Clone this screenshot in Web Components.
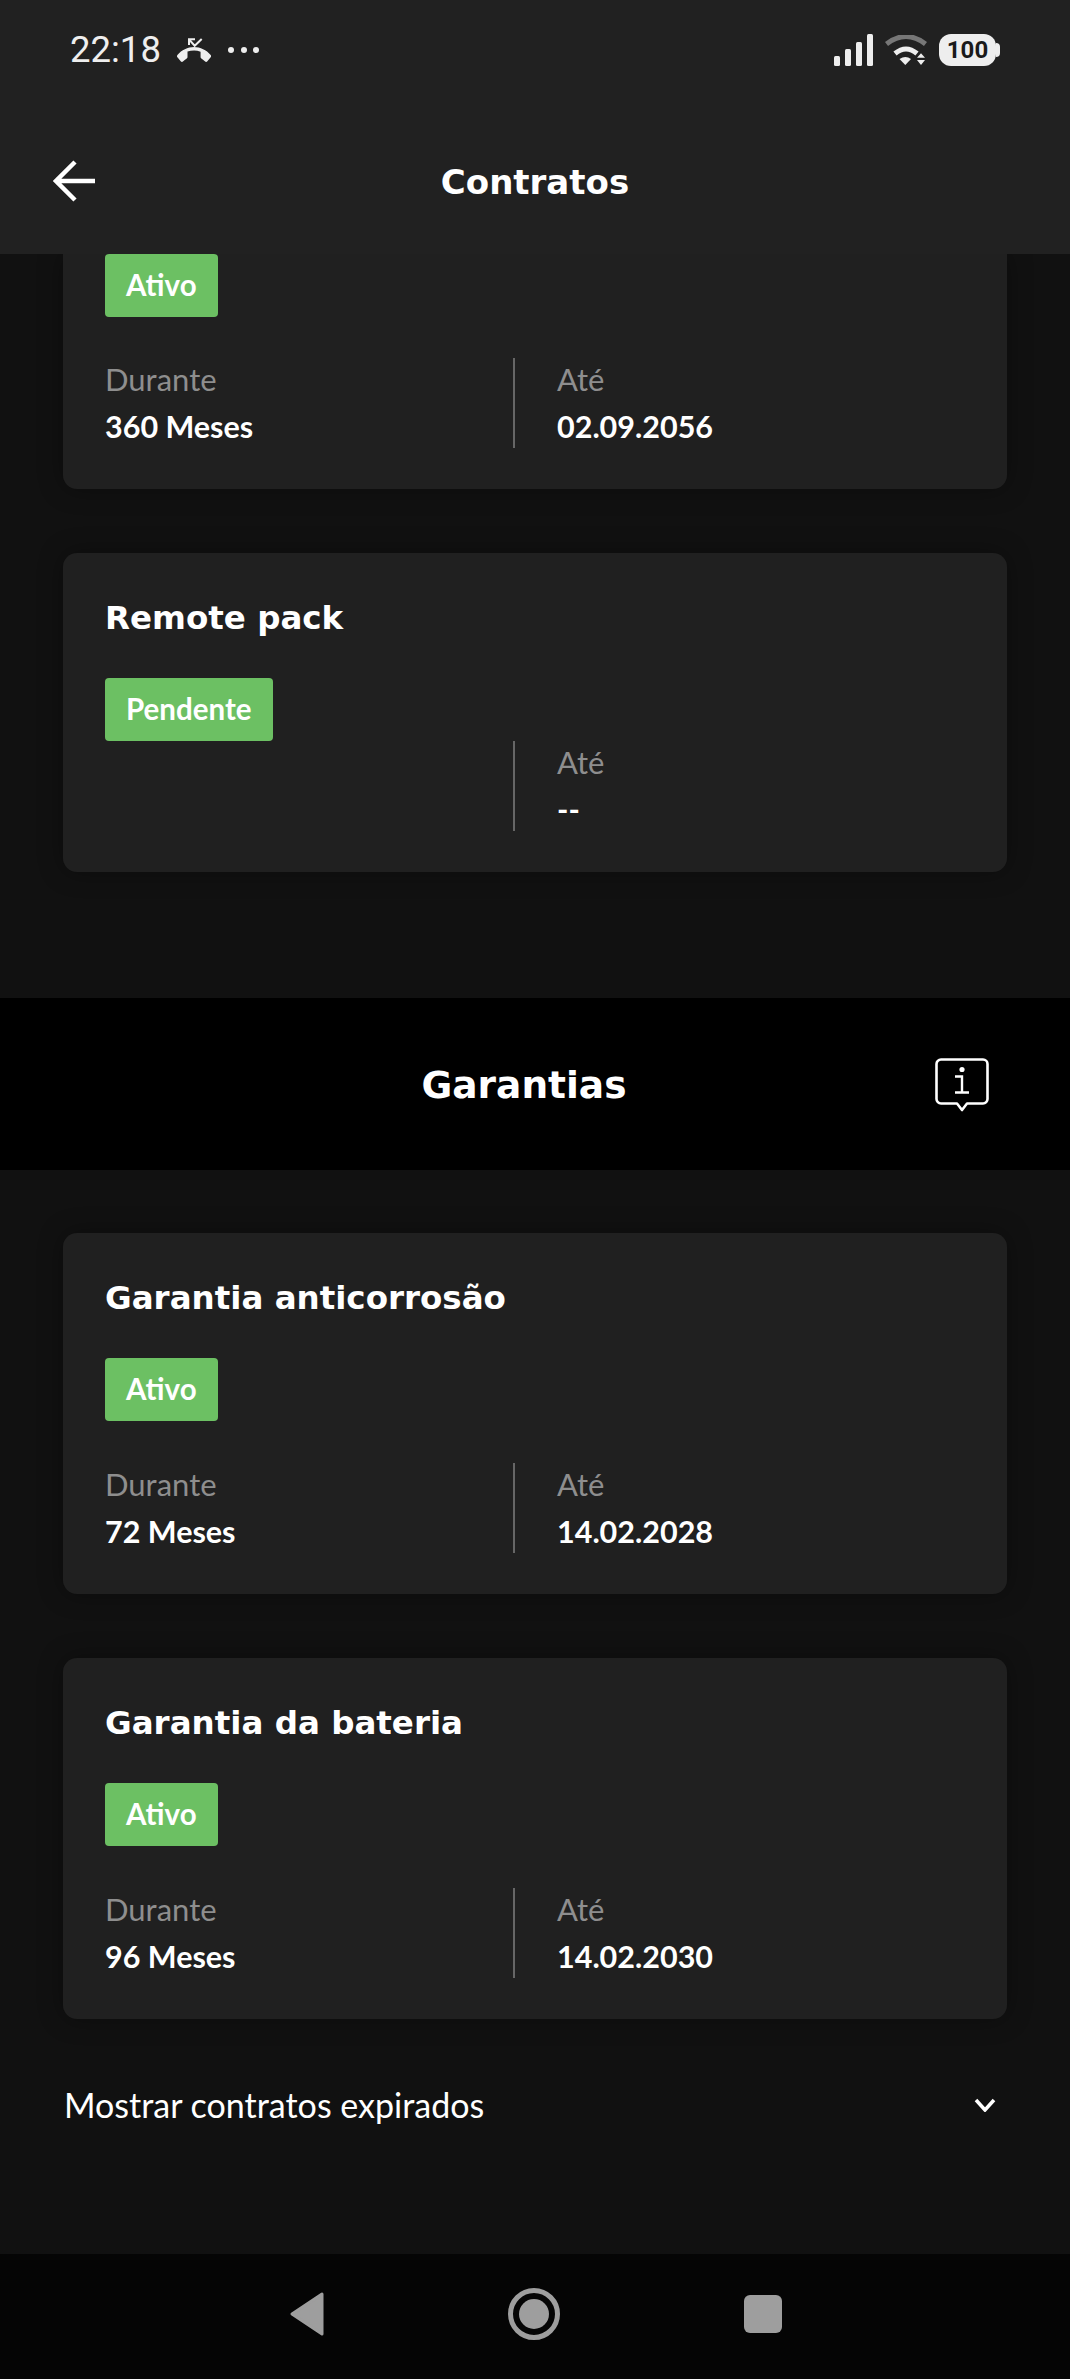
<!DOCTYPE html>
<html lang="pt">
<head>
<meta charset="utf-8">
<title>Contratos</title>
<style>
    html, body { margin: 0; background: #111; }
    body { width: 1070px; height: 2379px; overflow: hidden; }
</style>
</head>
<body>
<x-app>
    <x-status-bar slot="top" time="22:18" battery="100"></x-status-bar>
    <x-app-bar slot="top" heading="Contratos"></x-app-bar>

    <x-contract-card clipped status="Ativo" duration="360 Meses" until="02.09.2056"></x-contract-card>
    <x-contract-card tight heading="Remote pack" status="Pendente" until="--"></x-contract-card>

    <x-section-bar heading="Garantias"></x-section-bar>

    <x-contract-card heading="Garantia anticorrosão" status="Ativo" duration="72 Meses" until="14.02.2028"></x-contract-card>
    <x-contract-card heading="Garantia da bateria" status="Ativo" duration="96 Meses" until="14.02.2030"></x-contract-card>

    <x-expander label="Mostrar contratos expirados"></x-expander>

    <x-nav-bar slot="bottom"></x-nav-bar>
</x-app>
<script>
"use strict"

const titleFont = `"DejaVu Sans", sans-serif`
const bodyFont = `Lato, "Noto Sans", sans-serif`

class App extends HTMLElement {
    constructor() {
        super()
        this.attachShadow({ mode: "open" }).innerHTML = `
            <style>
                :host {
                    display: flex;
                    flex-direction: column;
                    height: 2379px;
                    background: #111;
                }
                main {
                    flex: 1;
                    display: flex;
                    flex-direction: column;
                    overflow: hidden;
                }
            </style>
            <slot name="top"></slot>
            <main><slot></slot></main>
            <slot name="bottom"></slot>
        `
    }
}

class StatusBar extends HTMLElement {
    constructor() {
        super()
        this.attachShadow({ mode: "open" }).innerHTML = `
            <style>
                :host {
                    display: flex;
                    align-items: center;
                    height: 96px;
                    padding: 2px 74px 0 70px;
                    background: #212121;
                    color: #eee;
                    font: 400 36.5px/1 Roboto, sans-serif;
                }
                .left { display: flex; align-items: center; gap: 16px; }
                .right { display: flex; align-items: center; margin-left: auto; }
                svg { display: block; }
                .battery {
                    position: relative;
                    width: 57px;
                    height: 32px;
                    margin-left: 12px;
                    border-radius: 12px;
                    background: #eee;
                    color: #1a1a1a;
                    font: 700 24px/32px Roboto, sans-serif;
                    text-align: center;
                }
                .battery::after {
                    content: "";
                    position: absolute;
                    right: -4px;
                    top: 9px;
                    width: 4px;
                    height: 14px;
                    border-radius: 0 4px 4px 0;
                    background: #eee;
                }
            </style>
            <div class="left">
                <span id="time"></span>
                <svg width="34" height="26" viewBox="0 0 34 26" fill="#eee">
                    <path stroke="#eee" stroke-width="2" fill="none" d="M18 2.3H12V8M12 2.3l5.7 6.4 7-6.7"/>
                    <path transform="translate(0 -1.9) scale(1.42 1.7)" d="M12 9c-1.6 0-3.15.25-4.6.72v3.1c0 .39-.23.74-.56.9-.98.49-1.87 1.12-2.66 1.85-.18.18-.43.28-.7.28-.28 0-.53-.11-.71-.29L.29 13.08c-.18-.17-.29-.42-.29-.7 0-.28.11-.53.29-.71C3.34 8.78 7.46 7 12 7s8.66 1.78 11.71 4.67c.18.18.29.43.29.71 0 .28-.11.53-.29.71l-2.48 2.48c-.18.18-.43.29-.71.29-.27 0-.52-.11-.7-.28-.79-.74-1.69-1.36-2.67-1.85-.33-.16-.56-.5-.56-.9v-3.1C15.15 9.25 13.6 9 12 9z"/>
                </svg>
                <svg width="32" height="8" viewBox="0 0 32 8" fill="#eee">
                    <circle cx="4" cy="4" r="3"/><circle cx="17" cy="4" r="3"/><circle cx="29" cy="4" r="3"/>
                </svg>
            </div>
            <div class="right">
                <svg width="39" height="32" viewBox="0 0 39 32" fill="#eee">
                    <rect x="0" y="22" width="6" height="10" rx="1.5"/>
                    <rect x="11" y="15" width="6" height="17" rx="1.5"/>
                    <rect x="22" y="8" width="6" height="24" rx="1.5"/>
                    <rect x="33" y="0" width="6" height="32" rx="1.5"/>
                </svg>
                <svg style="margin-left:12px" width="42" height="30" viewBox="0 0 42 30" fill="none">
                    <path stroke="#777" stroke-width="5" d="M1.5 9Q21 -6 40.5 9"/>
                    <path stroke="#eee" stroke-width="5" d="M10 18.5Q21 9.5 32 18.5"/>
                    <path fill="#eee" d="M14.5 24Q20.5 20 26 24L20.3 30Z"/>
                    <path fill="#eee" d="M36 18.3L40 22.7H32ZM32 25H40L36 30Z"/>
                </svg>
                <div class="battery" id="battery"></div>
            </div>
        `
    }
    static observedAttributes = ["time", "battery"]
    attributeChangedCallback(name, old, newVal) {
        this.shadowRoot.getElementById(name).textContent = newVal
    }
}

class AppBar extends HTMLElement {
    constructor() {
        super()
        this.attachShadow({ mode: "open" }).innerHTML = `
            <style>
                :host {
                    display: flex;
                    align-items: center;
                    justify-content: center;
                    position: relative;
                    z-index: 1;
                    height: 144px;
                    padding-top: 12px;
                    background: #212121;
                    color: #fff;
                    font: 700 34px/1 ${titleFont};
                }
                svg { position: absolute; left: 53px; top: 62px; }
            </style>
            <svg width="42" height="42" viewBox="0 0 42 42" fill="none" stroke="#fff" stroke-width="4.5">
                <path d="M42 21H3M22 2L3 21L22 40"/>
            </svg>
            <span id="heading"></span>
        `
    }
    static observedAttributes = ["heading"]
    attributeChangedCallback(name, old, newVal) {
        this.shadowRoot.getElementById("heading").textContent = newVal
    }
}

class StatusBadge extends HTMLElement {
    constructor() {
        super()
        this.attachShadow({ mode: "open" }).innerHTML = `
            <style>
                :host {
                    display: block;
                    width: fit-content;
                    height: 63px;
                    padding: 0 21px;
                    border-radius: 4px;
                    background: #6cc063;
                    color: #fff;
                    font: 700 29.5px/62px ${bodyFont};
                }
            </style>
            <slot></slot>
        `
    }
}

class ContractCard extends HTMLElement {
    constructor() {
        super()
        this.attachShadow({ mode: "open" }).innerHTML = `
            <style>
                :host {
                    display: block;
                    margin: 0 63px 64px;
                    padding: 45px 42px 41px;
                    border-radius: 14px;
                    background: #202020;
                    box-shadow: 0 0 24px rgba(0, 0, 0, .35);
                    color: #fff;
                }
                :host([clipped]) {
                    padding-top: 0;
                    border-radius: 0 0 14px 14px;
                }
                :host([clipped]) h3 { display: none; }
                :host([clipped]) .info { margin-top: 41px; }
                h3 {
                    margin: 0 0 40px;
                    font: 700 32.5px/40px ${titleFont};
                }
                .info {
                    display: grid;
                    grid-template-columns: 408px 1fr;
                    height: 90px;
                    margin-top: 42px;
                }
                :host([tight]) .info { margin-top: 0; }
                .cell + .cell {
                    padding-left: 42px;
                    border-left: 2px solid #666;
                }
                .label {
                    color: #8e8e8e;
                    font: 400 31px/42px ${bodyFont};
                }
                .value {
                    margin-top: 5px;
                    font: 700 30.5px/42px ${bodyFont};
                }
            </style>
            <h3 id="heading"></h3>
            <status-badge id="status"></status-badge>
            <div class="info">
                <div class="cell" id="left">
                    <div class="label">Durante</div>
                    <div class="value" id="duration"></div>
                </div>
                <div class="cell">
                    <div class="label">Até</div>
                    <div class="value" id="until"></div>
                </div>
            </div>
        `
        this.shadowRoot.getElementById("left").style.visibility = "hidden"
    }
    static observedAttributes = ["heading", "status", "duration", "until"]
    attributeChangedCallback(name, old, newVal) {
        this.shadowRoot.getElementById(name).textContent = newVal
        if (name === "duration") {
            this.shadowRoot.getElementById("left").style.visibility = "visible"
        }
    }
}

class SectionBar extends HTMLElement {
    constructor() {
        super()
        this.attachShadow({ mode: "open" }).innerHTML = `
            <style>
                :host {
                    display: flex;
                    align-items: center;
                    justify-content: center;
                    position: relative;
                    height: 168px;
                    margin: 62px 0 63px;
                    padding: 4px 22px 0 0;
                    background: #000;
                    color: #fff;
                    font: 700 37.5px/1 ${titleFont};
                }
                svg { position: absolute; right: 81px; top: 60px; }
            </style>
            <span id="heading"></span>
            <svg width="54" height="54" viewBox="0 0 54 54" fill="none" stroke="#fff">
                <path stroke-width="2.6" stroke-linejoin="round" d="M6 1.5H48A4.5 4.5 0 0 1 52.500 6V41A4.500 4.500 0 0 1 48 45.500H32L27 52L22 45.500H6A4.500 4.500 0 0 1 1.500 41V6A4.500 4.500 0 0 1 6 1.500Z"/>
                <circle cx="27" cy="11.500" r="2.600" fill="#fff" stroke="none"/>
                <path stroke-width="2.400" d="M20 18.500H27V34.500M20 34.500H34"/>
            </svg>
        `
    }
    static observedAttributes = ["heading"]
    attributeChangedCallback(name, old, newVal) {
        this.shadowRoot.getElementById("heading").textContent = newVal
    }
}

class Expander extends HTMLElement {
    constructor() {
        super()
        this.attachShadow({ mode: "open" }).innerHTML = `
            <style>
                :host {
                    display: flex;
                    align-items: center;
                    justify-content: space-between;
                    height: 44px;
                    padding: 0 74px 0 64px;
                    color: #fff;
                    font: 400 34px/44px ${bodyFont};
                }
                svg { display: block; }
            </style>
            <span id="label"></span>
            <svg width="22" height="14" viewBox="0 0 22 14" fill="none" stroke="#fff" stroke-width="3.500">
                <path d="M2 2L11 12L20 2"/>
            </svg>
        `
    }
    static observedAttributes = ["label"]
    attributeChangedCallback(name, old, newVal) {
        this.shadowRoot.getElementById("label").textContent = newVal
    }
}

class NavBar extends HTMLElement {
    constructor() {
        super()
        this.attachShadow({ mode: "open" }).innerHTML = `
            <style>
                :host {
                    display: grid;
                    grid-template-columns: 34px 52px 38px;
                    justify-content: center;
                    align-items: center;
                    column-gap: 184px;
                    height: 119px;
                    padding: 0 0 6px 2px;
                    background: #050505;
                }
                svg { display: block; }
            </style>
            <svg width="34" height="44" viewBox="0 0 34 44" fill="#9e9e9e">
                <path stroke="#9e9e9e" stroke-width="3" stroke-linejoin="round" d="M32 2V42L2 22Z"/>
            </svg>
            <svg width="52" height="52" viewBox="0 0 52 52" fill="#9e9e9e">
                <circle cx="26" cy="26" r="23.500" fill="none" stroke="#9e9e9e" stroke-width="5"/>
                <circle cx="26" cy="26" r="15"/>
            </svg>
            <svg width="38" height="38" viewBox="0 0 38 38" fill="#9e9e9e">
                <rect width="38" height="38" rx="6"/>
            </svg>
        `
    }
}

customElements.define("x-app", App)
customElements.define("x-status-bar", StatusBar)
customElements.define("x-app-bar", AppBar)
customElements.define("status-badge", StatusBadge)
customElements.define("x-contract-card", ContractCard)
customElements.define("x-section-bar", SectionBar)
customElements.define("x-expander", Expander)
customElements.define("x-nav-bar", NavBar)
</script>
</body>
</html>
